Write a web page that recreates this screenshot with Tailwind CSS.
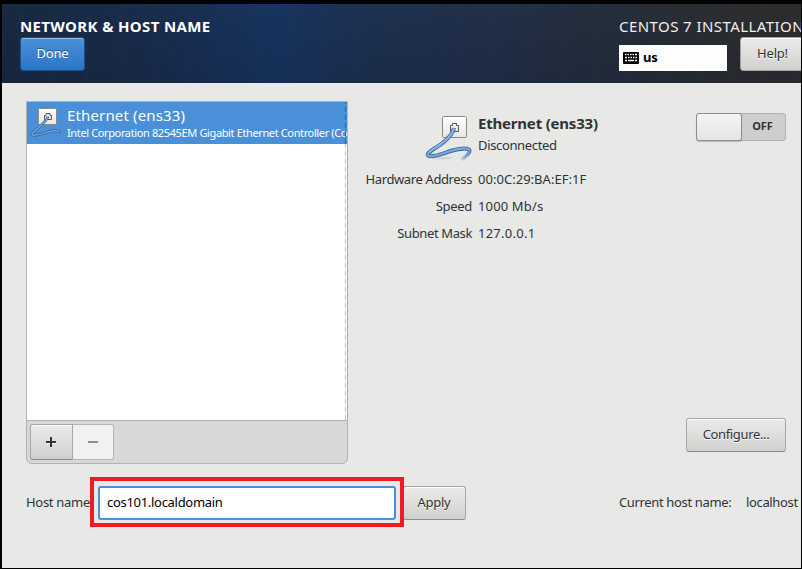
<!DOCTYPE html>
<html lang="en">
<head>
<meta charset="utf-8">
<title>Network &amp; Host Name</title>
<script src="https://cdn.jsdelivr.net/npm/@tailwindcss/browser@4"></script>
</head>
<body class="h-[569px] w-[802px] overflow-hidden bg-black pt-1 pl-0.5 font-['Noto_Sans',sans-serif] text-[13px] leading-[18px] tracking-[-0.2px] text-[#2e3436]">
<svg class="absolute h-0 w-0">
  <defs>
    <linearGradient id="plate" x1="0" y1="0" x2="0" y2="1"><stop offset="0" stop-color="#fff"/><stop offset="1" stop-color="#e6e6e4"/></linearGradient>
    <linearGradient id="tail-dark" gradientUnits="userSpaceOnUse" x1="46" y1="40" x2="37" y2="49"><stop offset="0" stop-color="#3a679f"/><stop offset="1" stop-color="#3a679f" stop-opacity="0"/></linearGradient>
    <linearGradient id="tail-light" gradientUnits="userSpaceOnUse" x1="46" y1="40" x2="37" y2="49"><stop offset="0" stop-color="#7ba9dc"/><stop offset="1" stop-color="#7ba9dc" stop-opacity="0"/></linearGradient>
    <symbol id="wired" viewBox="0 0 48 50">
      <ellipse cx="16" cy="46" rx="13" ry="1.500" fill="#000" opacity=".08"/>
      <rect x="18.500" y="4.500" width="24" height="21" rx="1.200" fill="url(#plate)" stroke="#888a85"/>
      <path d="M26.500 19.500v-6h2v-2h4v2h2v6z" fill="#eeeeec" stroke="#555753"/>
      <g fill="none">
        <path d="M30 16C29 22 25 26 18 31.500 12 36 8 37.500 4.500 41c-2 2.500 0 3.500 4 3 8-.800 13-3.500 20-5.500 8-2.300 15-2.500 17-.500" stroke="#3a679f" stroke-width="4"/>
        <path d="M45.200 37.500c2 2-1.500 6-8 10.500" stroke="url(#tail-dark)" stroke-width="3.400"/>
        <path d="M30 16C29 22 25 26 18 31.500 12 36 8 37.500 4.500 41c-2 2.500 0 3.500 4 3 8-.800 13-3.500 20-5.500 8-2.300 15-2.500 17-.500" stroke="#7ba9dc" stroke-width="2.200"/>
        <path d="M45.200 37.500c2 2-1.500 6-8 10.500" stroke="url(#tail-light)" stroke-width="1.800"/>
        <path d="M29.500 17C28 23 24 26 17.500 31 12 35 8 37 5 40" stroke="#bcd4ef" stroke-width=".6"/>
      </g>
    </symbol>
    <symbol id="wired-small" viewBox="0 0 32 30">
      <rect x="8.500" y="1.500" width="18" height="16" rx="1" fill="url(#plate)" stroke="#888a85"/>
      <path d="M14.500 12.500v-4h1.500v-2h4v2h1.500v4z" fill="#eeeeec" stroke="#555753"/>
      <g fill="none">
        <path d="M18 9.500C17 14 9 20 3 25.500c-2.500 2.500 0 3 4 2.500 6-1 12-4 18-4.300 4 0 5.500.800 3 2.800" stroke="#35619b" stroke-width="2.800"/>
        <path d="M18 9.500C17 14 9 20 3 25.500c-2.500 2.500 0 3 4 2.500 6-1 12-4 18-4.300 4 0 5.500.800 3 2.800" stroke="#7ba9dc" stroke-width="1.200"/>
      </g>
    </symbol>
  </defs>
</svg>
<div class="flex h-[564px] w-[799px] flex-col overflow-hidden bg-[#e8e8e6]">
  <header class="flex h-[79px] shrink-0 bg-[repeating-linear-gradient(90deg,transparent_0_13px,#2b4b7a0a_17px,transparent_21px_34px),linear-gradient(0deg,#08102a28,transparent),linear-gradient(90deg,#192941_0%,#192c4b_18%,#18345f_34%,#1d3150_46%,#212f48_60%,#252e3a_77%,#2c2d2e_92%,#2d2d2d_100%)] pl-[18px] text-white">
    <div class="w-[599px] shrink-0 pt-3">
      <h1 class="h-[21px] text-[15px] leading-5 font-bold tracking-[0.37px] whitespace-nowrap">NETWORK &amp; HOST NAME</h1>
      <button class="flex h-[34px] w-[65px] items-center justify-center rounded-[3px] border border-[#1c5187] bg-linear-to-b from-[#4a90d9] to-[#2a76c6] pb-0.5 shadow-[inset_0_1px_#8ab9ea] [text-shadow:0_-1px_#215b9c]">Done</button>
    </div>
    <div class="shrink-0 pt-3">
      <div class="h-[21px] text-[15px] leading-5 tracking-[0.43px] whitespace-nowrap text-[#eeeeec]">CENTOS 7 INSTALLATION</div>
      <div class="flex gap-[13px]">
        <div class="mt-2 flex h-[26px] w-[108px] items-center gap-1 bg-[#fdfdfd] pl-1 text-[13px] font-bold text-black">
          <svg class="h-3 w-4" viewBox="0 0 16 12"><rect width="16" height="12" rx="1"/><path d="M2 2.500h1.500m1 0H6m1 0h1.500m1 0H11m1 0h2M2 5.500h2m1 0h1.500m1 0H9m1 0h1.500m1 0H14M2 8.500h2m1 0h6m1 0h2" stroke="#fff" stroke-width="1.600"/></svg>
          <span class="pb-0.5">us</span>
        </div>
        <button class="flex h-[34px] w-[65px] shrink-0 items-center justify-center rounded-[3px] border border-[#a1a19d] bg-linear-to-b from-[#ebebe9] to-[#d0d0ce] pb-0.5 text-[#2e3436] shadow-[inset_0_1px_#fff] [text-shadow:0_1px_#fff]">Help!</button>
      </div>
    </div>
  </header>

  <main class="flex h-[381px] shrink-0 pt-[18px] pl-6">
    <section class="flex h-[363px] w-[322px] shrink-0 flex-col overflow-hidden rounded-b-md border border-[#b2b2af] bg-[#d8d8d6]">
      <div class="relative h-[319px] border-b border-[#b2b2af] bg-white">
        <div class="flex h-[42px] bg-[#4a90d9] text-white">
          <svg class="mt-[5px] ml-[3px] h-[30px] w-8 shrink-0"><use href="#wired-small"/></svg>
          <div class="ml-[5px] w-[280px] overflow-hidden whitespace-nowrap">
            <div class="mt-[3px] h-5 text-[15px] leading-5 tracking-[0.15px]">Ethernet (ens33)</div>
            <div class="text-[11px] leading-4 tracking-[-0.37px]">Intel Corporation 82545EM Gigabit Ethernet Controller (Copper)</div>
          </div>
        </div>
        <div class="absolute top-0 right-px h-full w-px bg-[repeating-linear-gradient(0deg,#c4c4c4_0_5px,transparent_5px_8px)]"></div>
        <div class="absolute top-0 right-px h-[42px] w-px bg-[repeating-linear-gradient(0deg,#2b68aa_0_5px,#4a90d9_5px_8px)]"></div>
      </div>
      <div class="flex pt-[3px] pl-[3px]">
        <button class="flex h-9 w-[43px] items-center justify-center rounded-l-[3px] border border-[#a7a7a3] border-b-[#8b8b87] bg-linear-to-b from-[#ebebe9] to-[#cfcfcd] pr-px shadow-[inset_0_1px_#fff]"><svg class="h-3 w-3" viewBox="0 0 12 12"><path d="M1 7h10" stroke="#fff" stroke-width="2"/><path d="M1 6h10M6 1v10" stroke="#2e3436" stroke-width="2"/></svg></button>
        <button class="flex h-9 w-[41px] items-center justify-center rounded-r-[3px] border border-l-0 border-[#b5b5b2] bg-[#f1f1f1]"><svg class="h-3 w-3" viewBox="0 0 12 12"><path d="M1 6h10" stroke="#8d9091" stroke-width="2"/></svg></button>
      </div>
    </section>

    <section class="w-[338px]">
      <div class="flex h-[65px]">
        <svg class="mt-[11px] ml-[76px] h-[50px] w-12 shrink-0"><use href="#wired"/></svg>
        <div class="ml-1.5 whitespace-nowrap">
          <h2 class="mt-[11px] h-6 text-[15px] leading-[22px] font-bold tracking-[-0.2px]">Ethernet (ens33)</h2>
          <p class="tracking-[-0.35px]">Disconnected</p>
        </div>
      </div>
      <dl class="grid grid-cols-[124px_1fr] gap-x-1.5 leading-[27px]">
        <dt class="text-right tracking-[-0.38px]">Hardware Address</dt><dd class="tracking-[0.03px]">00:0C:29:BA:EF:1F</dd>
        <dt class="text-right tracking-[-0.3px]">Speed</dt><dd class="tracking-[0.15px]">1000 Mb/s</dd>
        <dt class="text-right tracking-[-0.38px]">Subnet Mask</dt><dd class="tracking-[0.25px]">127.0.0.1</dd>
      </dl>
    </section>

    <div class="flex w-[100px] flex-col items-end justify-between pt-3 pb-3">
      <div class="flex h-7 w-[90px] rounded-[3px] border border-[#b1b1ae] bg-[#cececc] text-[11px] font-bold">
        <div class="-mt-px -ml-px h-7 w-[46px] rounded-[3px] border border-[#8d8d89] bg-linear-to-b from-[#f4f4f3] to-[#e5e5e3] shadow-[0_1px_1px_#0003]"></div>
        <span class="flex-1 pr-0.5 text-center leading-6 tracking-[-0.1px]">OFF</span>
      </div>
      <button class="flex h-[34px] w-[100px] items-center justify-center rounded-[3px] border border-[#a7a7a3] border-b-[#8b8b87] bg-linear-to-b from-[#ebebe9] to-[#d0d0ce] pb-[3px] tracking-[-0.35px] shadow-[inset_0_1px_#fff] [text-shadow:0_1px_#fff]">Configure...</button>
    </div>
  </main>

  <footer class="mt-[22px] flex h-[34px] items-center pl-6 whitespace-nowrap">
    <label class="w-[72px] shrink-0 pb-0.5 tracking-[-0.3px]">Host name:</label>
    <div class="relative h-[34px] w-[298px] shrink-0">
      <input class="h-full w-full rounded-[3px] border-2 border-[#4a90d9] bg-white pb-0.5 pl-[7px] tracking-[-0.3px] text-black outline-none" value="cos101.localdomain">
      <div class="absolute -top-[9px] -left-2 h-[50px] w-[314px] border-4 border-[#ed1c24]"><div class="h-full w-full border-4 border-b-[3px] border-[#e8e8e6]"></div></div>
    </div>
    <button class="ml-[7px] flex h-[34px] w-[63px] shrink-0 items-center justify-center rounded-[3px] border border-[#a7a7a3] border-b-[#8b8b87] bg-linear-to-b from-[#ebebe9] to-[#d0d0ce] pr-px pb-0.5 tracking-[-0.3px] shadow-[inset_0_1px_#fff] [text-shadow:0_1px_#fff]">Apply</button>
    <span class="ml-[153px] w-[127px] shrink-0 pb-0.5 tracking-[-0.35px]">Current host name:</span>
    <span class="pb-0.5 tracking-[-0.35px]">localhost</span>
  </footer>
</div>
</body>
</html>
